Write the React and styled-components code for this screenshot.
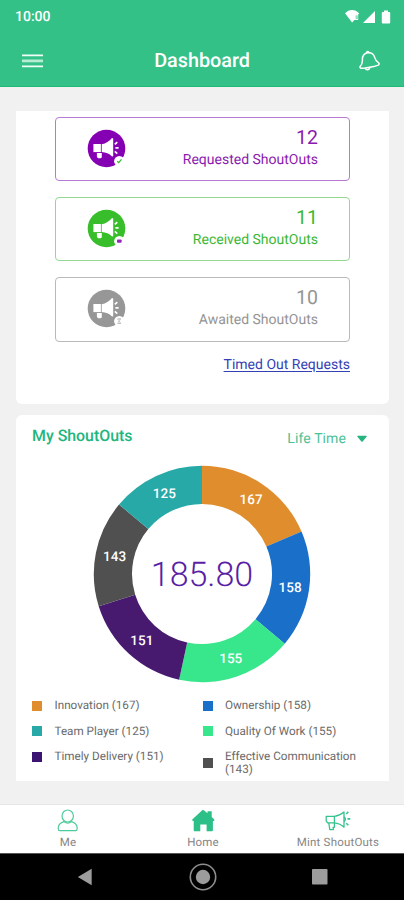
import React from "react";
import styled, { createGlobalStyle } from "styled-components";

const stats = [
  { label: "Requested ShoutOuts", value: 12, color: "#8a1bb0", icon: "#8600b3", border: "#b87ad0", badge: "check" },
  { label: "Received ShoutOuts", value: 11, color: "#3cb835", icon: "#38bd2b", border: "#93d790", badge: "dot" },
  { label: "Awaited ShoutOuts", value: 10, color: "#949494", icon: "#979797", border: "#b9b9b9", badge: "wait" },
];

// clockwise from the top of the chart
const slices = [
  { value: 167, color: "#e08e2d" },
  { value: 158, color: "#1a6fc9" },
  { value: 155, color: "#38e68b" },
  { value: 151, color: "#471a70" },
  { value: 143, color: "#505050" },
  { value: 125, color: "#27a9a8" },
];

const legend = [
  { label: "Innovation (167)", color: "#e08e2d" },
  { label: "Ownership (158)", color: "#1a6fc9" },
  { label: "Team Player (125)", color: "#27a9a8" },
  { label: "Quality Of Work (155)", color: "#38e68b" },
  { label: "Timely Delivery (151)", color: "#3a1470" },
  { label: "Effective Communication (143)", color: "#505050" },
];

const badges = {
  check: <path d="M30.2 32.2l1.5 1.4 2.8-3.2" fill="none" stroke="#3cb835" strokeWidth="1.3" />,
  dot: <rect x="30" y="30.4" width="4.6" height="3.4" rx="0.8" fill="#9427b8" />,
  wait: <path d="M30.4 30h3.6M30.4 34.2h3.6M31.2 32.1h2" stroke="#a2a2a2" strokeWidth="1" />,
};

const StatIcon = ({ color, badge }) => (
  <svg width="40" height="40" viewBox="0 0 40 40">
    <circle cx="19.5" cy="19.5" r="18.8" fill={color} />
    <g fill="#fff">
      <path d="M6.4 15h7.5v8.100H6.400z" />
      <path d="M14.700 15.200c4.200-.7 7.600-2.800 10.300-6.200l1.200.5v17.700l-1.200.2c-2.700-2.800-6.100-4-10.300-4.300z" />
      <path d="M9.900 23.900h4.900v4.500l-1.200.8h-2.600l-1.100-1.400z" />
    </g>
    <path d="M27.800 15.400l2.500-2.300M28.400 18.900h3.200M27.800 22.400l2.500 2.200" stroke="#fff" strokeWidth="1.700" fill="none" />
    <circle cx="32.400" cy="32.200" r="5.300" fill="#fff" />
    {badges[badge]}
  </svg>
);

const CX = 109;
const OUTER = 108.2;
const INNER = 70;

const point = (radius, angle) => [
  (CX + radius * Math.sin(angle)).toFixed(2),
  (CX - radius * Math.cos(angle)).toFixed(2),
];

const Donut = () => {
  const total = slices.reduce((sum, s) => sum + s.value, 0);
  let start = 0;
  return (
    <svg width="218" height="218" viewBox="0 0 218 218">
      {slices.map((slice) => {
        const end = start + (slice.value / total) * Math.PI * 2;
        const [x, y] = point((OUTER + INNER) / 2, (start + end) / 2);
        const d = `M${point(OUTER, start)} A${OUTER} ${OUTER} 0 0 1 ${point(OUTER, end)}
          L${point(INNER, end)} A${INNER} ${INNER} 0 0 0 ${point(INNER, start)}Z`;
        start = end;
        return (
          <g key={slice.value}>
            <path d={d} fill={slice.color} />
            <SliceLabel x={x} y={Number(y) + 4.8}>{slice.value}</SliceLabel>
          </g>
        );
      })}
      <Score x={CX} y={CX + 12}>185.80</Score>
    </svg>
  );
};

export default function App() {
  return (
    <Screen>
      <GlobalStyle />
      <Header>
        <StatusBar>
          <Clock>10:00</Clock>
          <svg width="46" height="16" viewBox="0 0 46 16" fill="#fff">
            <path d="M0 4.300C4-.2 10.200-.2 14.200 4.300l-1 1.300v5.400h-3.800L7.100 13.500z" />
            <path d="M10.600 6.300h2.200v3.800h-2.200z" fill="#8bdcba" />
            <path d="M30 2v12H18z" />
            <path d="M39 1.500h4V3h1.200q1 0 1 1v9.400q0 1-1 1h-6.400q-1 0-1-1V4q0-1 1-1H39z" />
          </svg>
        </StatusBar>
        <TitleBar>
          <svg width="21" height="14" viewBox="0 0 21 14">
            <path d="M0 1.400h21M0 12.400h21" stroke="#f0fff8" strokeWidth="1.900" />
            <path d="M0 6.900h21" stroke="#b5ecd3" strokeWidth="2.800" />
          </svg>
          <Title>Dashboard</Title>
          <svg width="22" height="22" viewBox="0 0 22 22" fill="none" stroke="#fff" strokeWidth="1.500" strokeLinejoin="round" strokeLinecap="round">
            <path d="M8.500 2.800C4.500 3.800 3.200 7 3.400 10.200c.2 3-.6 4.500-2.300 6.300-.4 1 .1 1.700 1 1.800l4.400-.2 8.200-1.500 4.500-1.500c1.200-.6 1.200-1.600.4-2.200-2.600-1.500-3.300-3-3.800-5.200C15 4.500 12.500 2.300 8.500 2.800z" />
            <path d="M7.500 2.800c0-1.600 2-1.900 2.500-.3M6.300 18.200c.8 2.400 4.300 1.800 4.600-.8" />
          </svg>
        </TitleBar>
      </Header>

      <Content>
        <StatsCard>
          {stats.map((stat) => (
            <StatBox key={stat.label} $border={stat.border}>
              <StatIcon color={stat.icon} badge={stat.badge} />
              <StatText $color={stat.color}>
                <StatValue>{stat.value}</StatValue>
                <StatLabel>{stat.label}</StatLabel>
              </StatText>
            </StatBox>
          ))}
          <TimedOut href="#">Timed Out Requests</TimedOut>
        </StatsCard>

        <ChartCard>
          <ChartHeader>
            <ChartTitle>My ShoutOuts</ChartTitle>
            <Period>
              Life Time
              <svg width="10" height="8" viewBox="0 0 11 8">
                <path d="M.8.500h9.400q.8.300.3 1L6.200 6.800q-.7.700-1.400 0L.5 1.500Q0 .8.800.500z" fill="#22b57e" />
              </svg>
            </Period>
          </ChartHeader>
          <ChartArea>
            <Donut />
          </ChartArea>
          <Legend>
            {legend.map((item) => (
              <LegendItem key={item.label}>
                <Swatch $color={item.color} />
                <LegendText>{item.label}</LegendText>
              </LegendItem>
            ))}
          </Legend>
        </ChartCard>
      </Content>

      <TabBar>
        <Tab>
          <svg width="22" height="23" viewBox="0 0 22 23" fill="none" stroke="#4fcb9b" strokeWidth="1.200">
            <ellipse cx="10.700" cy="7" rx="5.700" ry="6" />
            <path d="M6.800 12.600C3 14 1.300 15.500 1.300 18.500V20q0 1.600 1.500 1.600h15.800q1.500 0 1.500-1.600v-1.500c0-3-1.800-4.500-5.500-5.900-2.200 1.800-5.500 1.800-7.800 0z" />
          </svg>
          <TabLabel>Me</TabLabel>
        </Tab>
        <Tab>
          <svg width="24" height="23" viewBox="0 0 24 23" fill="#2cc088">
            <path d="M11.200 1.200q.8-.7 1.600 0l3.700 3.100V2.200h4.200v5.900l2.400 2.200q.6.700.1 1.400-.6.600-1.300.2v9.300q0 1-1 1h-5.300v-6.700H9.300v6.700H3.700q-1 0-1-1v-9.300q-.9.400-1.400-.3-.4-.7.200-1.300z" />
          </svg>
          <TabLabel>Home</TabLabel>
        </Tab>
        <Tab>
          <svg width="26" height="23" viewBox="0 0 26 23" fill="none" stroke="#35c38e" strokeWidth="1.300" strokeLinejoin="round">
            <path d="M1.200 7.300h8.200v6.500H2.600L1.200 12z" />
            <path d="M9.400 7.300c4-.4 7-2 9.600-4.300v15.200c-2.600-2.600-5.600-4-9.600-4.400" />
            <path d="M3.800 13.800l1 6.800h3.600l-.3-2.300h1.300v-4.500" />
            <path d="M19 7.800q2.600 2.300 0 4.600M21.300 5l2-2.300M22.500 9.900h2.800M21.300 14.300l2 2" strokeWidth="1.600" />
          </svg>
          <TabLabel>Mint ShoutOuts</TabLabel>
        </Tab>
      </TabBar>

      <SystemNav>
        <svg width="16" height="18" viewBox="0 0 16 18">
          <path d="M14.700.800v16.400L.800 9z" fill="#9c9c9c" />
        </svg>
        <svg width="28" height="28" viewBox="0 0 28 28">
          <circle cx="14" cy="14" r="12.700" fill="none" stroke="#8e8e8e" strokeWidth="1.600" />
          <circle cx="14" cy="14" r="7.200" fill="#9c9c9c" />
        </svg>
        <svg width="16" height="16" viewBox="0 0 16 16">
          <rect width="15.500" height="15.500" rx="0.800" fill="#9c9c9c" />
        </svg>
      </SystemNav>
    </Screen>
  );
}

const GlobalStyle = createGlobalStyle`
  * {
    box-sizing: border-box;
  }
  body {
    margin: 0;
    font-family: Roboto, "Liberation Sans", sans-serif;
    text-rendering: geometricPrecision;
  }
  svg {
    display: block;
    flex: none;
  }
`;

const Screen = styled.div`
  width: 404px;
  height: 900px;
  display: flex;
  flex-direction: column;
  background: #f1f1f1;
  overflow: hidden;
`;

const Header = styled.header`
  height: 87px;
  flex: none;
  background: #34c188;
  border-bottom: 1px solid #1fb878;
  color: #fff;
`;

const StatusBar = styled.div`
  height: 34px;
  display: flex;
  align-items: center;
  justify-content: space-between;
  padding: 0 13px 0 15px;
`;

const Clock = styled.span`
  font-size: 14px;
  font-weight: 500;
`;

const TitleBar = styled.div`
  height: 53px;
  display: flex;
  align-items: center;
  justify-content: space-between;
  padding: 0 23px 0 22px;
`;

const Title = styled.h1`
  margin: 0 0 0 2px;
  font-size: 19.8px;
  font-weight: 500;
`;

const Content = styled.main`
  flex: 1;
  display: flex;
  flex-direction: column;
  padding: 24px 15px 0 16px;
`;

const StatsCard = styled.section`
  height: 293px;
  display: flex;
  flex-direction: column;
  gap: 16px;
  padding: 6px 39px 0;
  background: #fff;
  border-radius: 0 0 6px 6px;
`;

const StatBox = styled.div`
  height: 64.2px;
  flex: none;
  display: flex;
  justify-content: space-between;
  padding: 11px 31px 0;
  border: 1px solid ${(props) => props.$border};
  border-radius: 4px;
`;

const StatText = styled.div`
  display: flex;
  flex-direction: column;
  align-items: flex-end;
  margin-top: -1px;
  color: ${(props) => props.$color};
`;

const StatValue = styled.span`
  font-size: 19.5px;
  line-height: 20px;
`;

const StatLabel = styled.span`
  margin-top: 4px;
  font-size: 14px;
  line-height: 16px;
`;

const TimedOut = styled.a`
  align-self: flex-end;
  margin-top: -2px;
  font-size: 14px;
  line-height: 18px;
  color: #3440b5;
  text-underline-offset: 2px;
`;

const ChartCard = styled.section`
  height: 366px;
  margin-top: 11px;
  background: #fff;
  border-radius: 6px 6px 0 0;
`;

const ChartHeader = styled.div`
  height: 50px;
  display: flex;
  justify-content: space-between;
  padding: 12px 22px 0 16px;
  color: #22b57e;
`;

const ChartTitle = styled.h2`
  margin: 0;
  font-size: 15.9px;
  font-weight: 500;
  line-height: 18px;
`;

const Period = styled.div`
  display: flex;
  align-items: center;
  gap: 11px;
  height: 23px;
  font-size: 14px;
  letter-spacing: 0.1px;
  color: #4cc298;
`;

const ChartArea = styled.div`
  display: flex;
  justify-content: center;
  padding-right: 1px;
`;

const SliceLabel = styled.text`
  fill: #fff;
  font-size: 13.5px;
  font-weight: 500;
  text-anchor: middle;
`;

const Score = styled.text`
  fill: #5a1fa5;
  font-size: 34px;
  font-weight: 300;
  text-anchor: middle;
`;

const Legend = styled.div`
  display: grid;
  grid-template-columns: 170.5px 170px;
  grid-template-rows: 25.5px 25.5px 38px;
  margin-top: 10px;
  padding-left: 16px;
`;

const LegendItem = styled.div`
  display: flex;
  align-items: center;
  gap: 12.5px;

  &:nth-child(5) {
    height: 25.5px;
  }
`;

const Swatch = styled.span`
  width: 10px;
  height: 10px;
  flex: none;
  background: ${(props) => props.$color};
`;

const LegendText = styled.span`
  font-size: 11.7px;
  line-height: 13.5px;
  color: #6a6a6a;
`;

const TabBar = styled.nav`
  height: 49px;
  flex: none;
  display: grid;
  grid-template-columns: repeat(3, 135px);
  padding-left: 0.5px;
  background: #fff;
  border-top: 1px solid #e6e6e6;
`;

const Tab = styled.div`
  display: flex;
  flex-direction: column;
  align-items: center;
  padding-top: 4px;
`;

const TabLabel = styled.span`
  margin-top: 3px;
  font-size: 11.5px;
  line-height: 14px;
  letter-spacing: 0.2px;
  color: #858585;
`;

const SystemNav = styled.div`
  height: 47px;
  flex: none;
  display: flex;
  align-items: center;
  justify-content: space-between;
  padding: 0 76px 0 77px;
  border-top: 1px solid #555;
  background: #000;
`;
